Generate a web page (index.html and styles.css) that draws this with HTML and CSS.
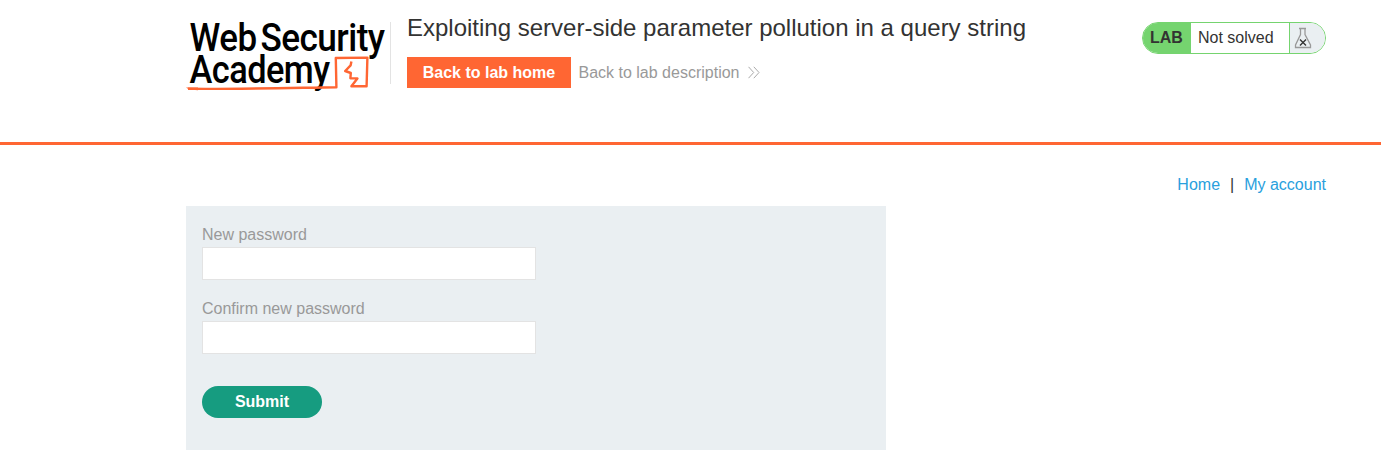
FILE: index.html
```html
<!DOCTYPE html>
<html lang="en">
<head>
<meta charset="utf-8">
<title>Exploiting server-side parameter pollution in a query string</title>
<link rel="stylesheet" href="styles.css">
</head>
<body>
<header class="lab-header">
  <svg class="logo" width="204" height="76" viewBox="0 0 204 76" role="img" aria-label="Web Security Academy">
    <g class="logo-text">
      <text x="3.5" y="34.7" textLength="67" lengthAdjust="spacingAndGlyphs">Web</text>
      <text x="74.5" y="34.7" textLength="124" lengthAdjust="spacingAndGlyphs">Security</text>
      <text x="3.5" y="67.2" textLength="140" lengthAdjust="spacingAndGlyphs">Academy</text>
    </g>
    <path class="logo-line" d="M2 72.8C40 73.4 100 72 150.4 71.2L149.8 42L181.4 41.6L180.6 70.2L165.4 70.2L171.4 62.4L164.4 62.2L164.8 57L159.2 55L164.6 49.4L165.4 45.4"/>
    <path class="logo-stroke" d="M0 71.6L12 71.6L12 74.2L3 73.6Z"/>
  </svg>
  <div class="title-block">
    <h2>Exploiting server-side parameter pollution in a query string</h2>
    <div class="title-links">
      <a class="button-orange" href="#">Back to lab home</a>
      <a class="link-back" href="#">Back to lab description
        <svg width="13" height="13" viewBox="0 0 13 13"><path d="M.5 .8L5.7 6.5L.5 12.2M5.8 .8L11 6.5L5.8 12.2"/></svg>
      </a>
    </div>
  </div>
  <div class="lab-status">
    <span class="status-label">LAB</span>
    <span class="status-text">Not solved</span>
    <span class="status-icon">
      <svg width="18" height="22" viewBox="0 0 18 22"><path class="flask" d="M5 1.5H12M6.5 1.5V7.5L1.5 18V20.5H16.5V18L11 7.5V1.5"/><path class="cross" d="M6 12.5L12 18.5M12 12.5L6 18.5"/></svg>
    </span>
  </div>
</header>
<main class="page">
  <nav class="top-links"><a href="#">Home</a><span>|</span><a href="#">My account</a></nav>
  <form class="login-form">
    <label for="new-password">New password</label>
    <input id="new-password" type="password">
    <label for="confirm-password">Confirm new password</label>
    <input id="confirm-password" type="password">
    <button type="button">Submit</button>
  </form>
</main>
</body>
</html>
```
FILE: styles.css
```css
* { box-sizing: border-box; }
body {
  margin: 0;
  background: #fff;
  color: #333332;
  font: 16px/18px "Liberation Sans", Arial, sans-serif;
}
a { text-decoration: none; }
.lab-header {
  display: flex;
  align-items: flex-start;
  height: 145px;
  padding: 16px 55px 0 186px;
  border-bottom: 3px solid #ff6633;
}
.logo { flex: none; overflow: visible; }
.logo-text {
  font-family: Roboto, sans-serif;
  font-size: 38px;
  font-weight: 500;
  letter-spacing: -0.6px;
}
.logo-line { fill: none; stroke: #ff6633; stroke-width: 2.4; stroke-linejoin: round; }
.logo-stroke { fill: #ff6633; }
.title-block {
  margin-top: 6px;
  padding-left: 16px;
  height: 62px;
  border-left: 1px solid #e3e3e3;
}
.title-block h2 {
  margin: -8px 0 0;
  font-size: 24px;
  font-weight: 400;
  line-height: 28px;
  white-space: nowrap;
}
.title-links { display: flex; align-items: center; margin-top: 15px; }
.button-orange {
  width: 164px;
  height: 31px;
  line-height: 31px;
  background: #ff6633;
  color: #fff;
  font-weight: 700;
  text-align: center;
}
.link-back { display: flex; align-items: center; margin-left: 7.5px; color: #999; }
.link-back svg { margin-left: 9px; fill: none; stroke: #aaa; }
.lab-status {
  display: flex;
  width: 184px;
  height: 32px;
  margin: 6px 0 0 auto;
  overflow: hidden;
  border: 1px solid #75d46f;
  border-radius: 16px;
  line-height: 30px;
}
.status-label { width: 48px; padding-left: 7px; background: #75d46f; font-weight: 700; }
.status-text { width: 98px; padding-left: 7px; }
.status-icon {
  flex: 1;
  padding: 4px 0 0 4px;
  border-left: 1px solid #75d46f;
  background: #eaeff2;
}
.status-icon svg { display: block; fill: none; }
.flask { stroke: #999; stroke-width: 1.3; }
.cross { stroke: #333; stroke-width: 1.4; }
.page { padding: 31px 55px 0 186px; }
.top-links { display: flex; justify-content: flex-end; gap: 10px; }
.top-links a { color: #29a0dd; }
.login-form {
  display: flex;
  flex-direction: column;
  align-items: flex-start;
  width: 700px;
  height: 244px;
  margin-top: 12px;
  padding: 20px 16px;
  background: #eaeff2;
}
.login-form label { margin-bottom: 3px; color: #999; }
.login-form input {
  width: 334px;
  height: 33px;
  margin: 0 0 20px;
  border: 1px solid #e3e3e3;
  background: #fff;
}
.login-form button {
  width: 120px;
  height: 32px;
  margin-top: 12px;
  border: 0;
  border-radius: 16px;
  background: #169c80;
  color: #fff;
  font: 700 16px "Liberation Sans", Arial, sans-serif;
}
```
